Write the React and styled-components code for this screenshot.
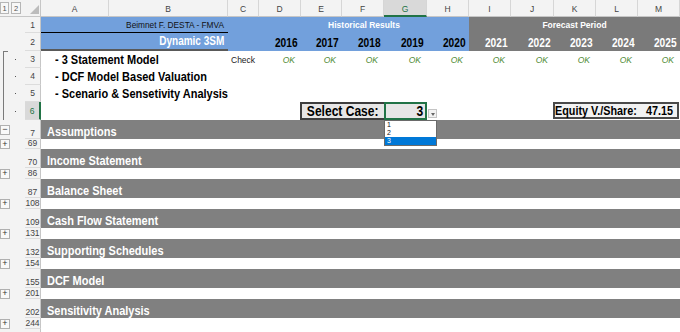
import React from 'react';
import styled, { createGlobalStyle } from 'styled-components';

const COLS = '25px 16px 68px 119px 31px 42px 41px 42px 43px 42px 42px 43px 42px 42px 42px';
const ARIAL = `"Liberation Sans", Arial, Helvetica, sans-serif`;
const BLUE = '#72a0dc';
const FORECAST = '#7a7a7a';
const BAR = '#808080';
const GREEN = '#217346';
const HEAD_BG = '#f3f3f3';

const GlobalStyle = createGlobalStyle`
  html, body { margin: 0; padding: 0; background: #fff; }
  body { font-family: ${ARIAL}; overflow: hidden; }
  * { box-sizing: border-box; }
`;

/* Arial Narrow look-alike: Liberation Sans squeezed horizontally */
const Narrow = styled.span`
  display: inline-block;
  white-space: nowrap;
  transform: scaleX(0.82);
  transform-origin: ${p => p.$origin || 'left'} center;
`;

const Sheet = styled.div`
  position: relative;
  width: 680px;
  height: 332px;
  overflow: hidden;
  background: #fff;
  display: flex;
  flex-direction: column;
`;

const Row = styled.div`
  display: grid;
  grid-template-columns: ${COLS};
  grid-template-rows: ${p => p.$h}px;
  height: ${p => p.$h}px;
  flex: none;
`;

/* ---------- column header ---------- */
const LevelBar = styled.div`
  grid-column: 1;
  display: flex;
  align-items: center;
  gap: 2px;
  background: ${HEAD_BG};
  border-bottom: 1px solid #c6c6c6;
`;
const LevelBtn = styled.div`
  width: ${p => (p.$wide ? 10 : 9)}px;
  height: 12px;
  border: 1px solid #b6b6b6;
  background: #f7f7f7;
  display: flex;
  align-items: center;
  justify-content: center;
  font: 7.5px ${ARIAL};
  color: #555;
`;
const Corner = styled.div`
  grid-column: 2;
  background: ${HEAD_BG};
  border-bottom: 1px solid #c6c6c6;
  border-right: 1px solid #c6c6c6;
  display: flex;
  align-items: flex-end;
  justify-content: flex-end;
  padding: 0 1px 2px 0;
`;
const CornerTri = styled.div`
  width: 0;
  height: 0;
  border-left: 9px solid transparent;
  border-bottom: 9px solid #bcbcbc;
`;
const ColHead = styled.div`
  background: ${p => (p.$sel ? '#d9d9d9' : HEAD_BG)};
  border-right: 1px solid #d6d6d6;
  border-bottom: ${p => (p.$sel ? `2px solid ${GREEN}` : '1px solid #c6c6c6')};
  display: flex;
  align-items: center;
  justify-content: center;
  padding-top: 2px;
  font: 8.5px ${ARIAL};
  color: ${p => (p.$sel ? '#217346' : '#444')};
`;

/* ---------- gutter / row headers ---------- */
const Gutter = styled.div`
  grid-column: 1;
  background: ${HEAD_BG};
  display: flex;
  align-items: center;
`;
const Bracket = styled.div`
  align-self: stretch;
  width: 5px;
  margin-left: 3px;
  border-left: 1px solid #7a7a7a;
  border-top: ${p => (p.$first ? '1px solid #7a7a7a' : 'none')};
`;
const Dot = styled.div`
  width: 1px;
  height: 1px;
  margin-left: 7px;
  background: #555;
`;
const OutlineBtn = styled.div`
  width: 10px;
  height: 10px;
  border: 1px solid #b0b0b0;
  background: #f9f9f9;
  display: flex;
  align-items: center;
  justify-content: center;
  font: 9px ${ARIAL};
  line-height: 9px;
  color: #333;
`;
const RowHead = styled.div`
  grid-column: 2;
  display: flex;
  justify-content: center;
  align-items: ${p => (p.$bottom ? 'flex-end' : 'center')};
  background: ${p => (p.$sel ? '#d9d9d9' : HEAD_BG)};
  border-right: ${p => (p.$sel ? `2px solid ${GREEN}` : '1px solid #c6c6c6')};
  border-bottom: 1px solid #dcdcdc;
  font: 8.5px ${ARIAL};
  line-height: 10px;
  color: ${p => (p.$sel ? GREEN : '#444')};
`;

/* ---------- title band ---------- */
const AuthorCell = styled.div`
  grid-column: 3 / span 2;
  background: ${BLUE};
  border-bottom: 1px solid #000;
  display: flex;
  align-items: center;
  justify-content: flex-end;
  padding-right: 4px;
  font: 8.3px ${ARIAL};
  color: #111;
`;
const BandFill = styled.div`
  grid-column: ${p => p.$col};
  background: ${p => p.$bg};
`;
const BandTitle = styled.div`
  grid-column: ${p => p.$col} / span 5;
  background: ${p => p.$bg};
  display: flex;
  align-items: center;
  justify-content: center;
  font: bold 8.5px ${ARIAL};
  color: #fff;
`;
const ModelName = styled.div`
  grid-column: 3 / span 2;
  background: ${BLUE};
  border-bottom: 2px solid #595959;
  display: flex;
  align-items: center;
  justify-content: flex-end;
  padding-right: 4px;
  font: bold 12.2px ${ARIAL};
  color: #fff;
`;
const YearCell = styled.div`
  background: ${p => (p.$forecast ? FORECAST : BLUE)};
  color: ${p => (p.$forecast ? '#fff' : '#000')};
  display: flex;
  align-items: center;
  justify-content: flex-end;
  padding: 1px 3px 0 0;
  font: bold 12.4px ${ARIAL};
`;

/* ---------- intro rows ---------- */
const ModelLine = styled.div`
  grid-column: 3 / span 2;
  display: flex;
  align-items: center;
  padding-left: 14px;
  white-space: nowrap;
  font: bold 13.4px ${ARIAL};
  color: #000;
`;
const CheckCell = styled.div`
  grid-column: 5;
  display: flex;
  align-items: center;
  padding-left: 3px;
  font: 8.5px ${ARIAL};
  color: #222;
`;
const OkCell = styled.div`
  display: flex;
  align-items: center;
  justify-content: flex-end;
  padding-right: 6px;
  font: italic 8.5px ${ARIAL};
  color: #4f8a35;
`;

/* ---------- row 6 controls ---------- */
const SelectLabel = styled.div`
  grid-column: 7 / span 2;
  margin-left: -1px;
  background: #e7e6e6;
  border: 2px solid #3e3e3e;
  border-right: none;
  display: flex;
  align-items: center;
  justify-content: center;
  white-space: nowrap;
  font: bold 14.7px ${ARIAL};
  color: #000;
`;
const SelectValue = styled.div`
  grid-column: 9;
  background: #e7e6e6;
  border: 2px solid ${GREEN};
  display: flex;
  align-items: center;
  justify-content: flex-end;
  padding-right: 2px;
  font: bold 14.7px ${ARIAL};
  color: #000;
`;
const EquityBox = styled.div`
  grid-column: 13 / span 3;
  margin: 0 1px 1px -1px;
  background: #f2f2f2;
  border: 2px solid #4a4a4a;
  display: flex;
  align-items: center;
  padding: 0 4px 0 0;
  white-space: nowrap;
  font: bold 13.2px ${ARIAL};
  color: #000;
`;
const EquityLabel = styled(Narrow)`
  flex: 0 1 auto;
  min-width: 0;
`;
const EquityValue = styled(Narrow)`
  flex: none;
  margin-left: auto;
`;

/* ---------- sections ---------- */
const SectionBar = styled.div`
  grid-column: 3 / span 13;
  background: ${BAR};
  display: flex;
  align-items: center;
  padding: 3px 0 0 6px;
  font: bold 13.4px ${ARIAL};
  color: #fff;
  white-space: nowrap;
`;

/* ---------- overlays ---------- */
const DropButton = styled.div`
  position: absolute;
  left: 428px;
  top: 109px;
  width: 9px;
  height: 9px;
  border: 1px solid #c4c4c4;
  background: #f2f2f2;
  display: flex;
  align-items: center;
  justify-content: center;
`;
const DropArrow = styled.div`
  width: 0;
  height: 0;
  border-left: 2.5px solid transparent;
  border-right: 2.5px solid transparent;
  border-top: 3px solid #666;
  margin-top: 1px;
`;
const DropList = styled.ul`
  position: absolute;
  left: 384px;
  top: 120px;
  width: 53px;
  margin: 0;
  padding: 0;
  list-style: none;
  background: #fff;
  border: 1px solid #6a6a6a;
  font: 7px ${ARIAL};
`;
const DropItem = styled.li`
  height: 8px;
  line-height: 8px;
  padding-left: 2px;
  background: ${p => (p.$active ? '#0078d7' : 'transparent')};
  color: ${p => (p.$active ? '#fff' : '#111')};
`;

const LETTERS = ['A', 'B', 'C', 'D', 'E', 'F', 'G', 'H', 'I', 'J', 'K', 'L', 'M'];
const YEARS = [2016, 2017, 2018, 2019, 2020, 2021, 2022, 2023, 2024, 2025];
const LINES = ['- 3 Statement Model', '- DCF Model Based Valuation', '- Scenario & Sensetivity Analysis'];
const SECTIONS = [
  { n: 7, title: 'Assumptions', end: 69, gap: 10, open: true },
  { n: 70, title: 'Income Statement', end: 86, gap: 11 },
  { n: 87, title: 'Balance Sheet', end: 108, gap: 11 },
  { n: 109, title: 'Cash Flow Statement', end: 131, gap: 11 },
  { n: 132, title: 'Supporting Schedules', end: 154, gap: 11 },
  { n: 155, title: 'DCF Model', end: 201, gap: 11 },
  { n: 202, title: 'Sensitivity Analysis', end: 244, gap: 11 },
];

export default function App() {
  return (
    <>
      <GlobalStyle />
      <Sheet>
        <Row $h={17}>
          <LevelBar>
            <LevelBtn>1</LevelBtn>
            <LevelBtn $wide>2</LevelBtn>
          </LevelBar>
          <Corner>
            <CornerTri />
          </Corner>
          {LETTERS.map(l => (
            <ColHead key={l} $sel={l === 'G'}>{l}</ColHead>
          ))}
        </Row>

        <Row $h={16}>
          <Gutter />
          <RowHead>1</RowHead>
          <AuthorCell>Beimnet F. DESTA - FMVA</AuthorCell>
          <BandFill $col={5} $bg={BLUE} />
          <BandTitle $col={6} $bg={BLUE}>Historical Results</BandTitle>
          <BandTitle $col={11} $bg={FORECAST}>Forecast Period</BandTitle>
        </Row>

        <Row $h={18}>
          <Gutter />
          <RowHead>2</RowHead>
          <ModelName>
            <Narrow $origin="right">Dynamic 3SM</Narrow>
          </ModelName>
          <BandFill $col={5} $bg={BLUE} />
          {YEARS.map((y, i) => (
            <YearCell key={y} $forecast={i >= 5}>
              <Narrow $origin="right">{y}</Narrow>
            </YearCell>
          ))}
        </Row>

        {LINES.map((text, i) => (
          <Row $h={17} key={text}>
            <Gutter>
              <Bracket $first={i === 0} />
              <Dot />
            </Gutter>
            <RowHead>{i + 3}</RowHead>
            <ModelLine>
              <Narrow>{text}</Narrow>
            </ModelLine>
            {i === 0 && <CheckCell>Check</CheckCell>}
            {i === 0 && YEARS.map(y => <OkCell key={y}>OK</OkCell>)}
          </Row>
        ))}

        <Row $h={18}>
          <Gutter>
            <Bracket />
            <Dot />
          </Gutter>
          <RowHead $sel>6</RowHead>
          <SelectLabel>
            <Narrow $origin="center">Select Case:</Narrow>
          </SelectLabel>
          <SelectValue>
            <Narrow $origin="right">3</Narrow>
          </SelectValue>
          <EquityBox>
            <EquityLabel>Equity V./Share:</EquityLabel>
            <EquityValue $origin="right">47.15</EquityValue>
          </EquityBox>
        </Row>

        {SECTIONS.map(s => (
          <React.Fragment key={s.n}>
            <Row $h={19}>
              <Gutter>{s.open && <OutlineBtn>−</OutlineBtn>}</Gutter>
              <RowHead $bottom>{s.n}</RowHead>
              <SectionBar>
                <Narrow>{s.title}</Narrow>
              </SectionBar>
            </Row>
            <Row $h={s.gap}>
              <Gutter>
                <OutlineBtn>+</OutlineBtn>
              </Gutter>
              <RowHead $bottom>{s.end}</RowHead>
            </Row>
          </React.Fragment>
        ))}

        <Row $h={17}>
          <Gutter />
          <RowHead />
        </Row>

        <DropButton>
          <DropArrow />
        </DropButton>
        <DropList>
          <DropItem>1</DropItem>
          <DropItem>2</DropItem>
          <DropItem $active>3</DropItem>
        </DropList>
      </Sheet>
    </>
  );
}
